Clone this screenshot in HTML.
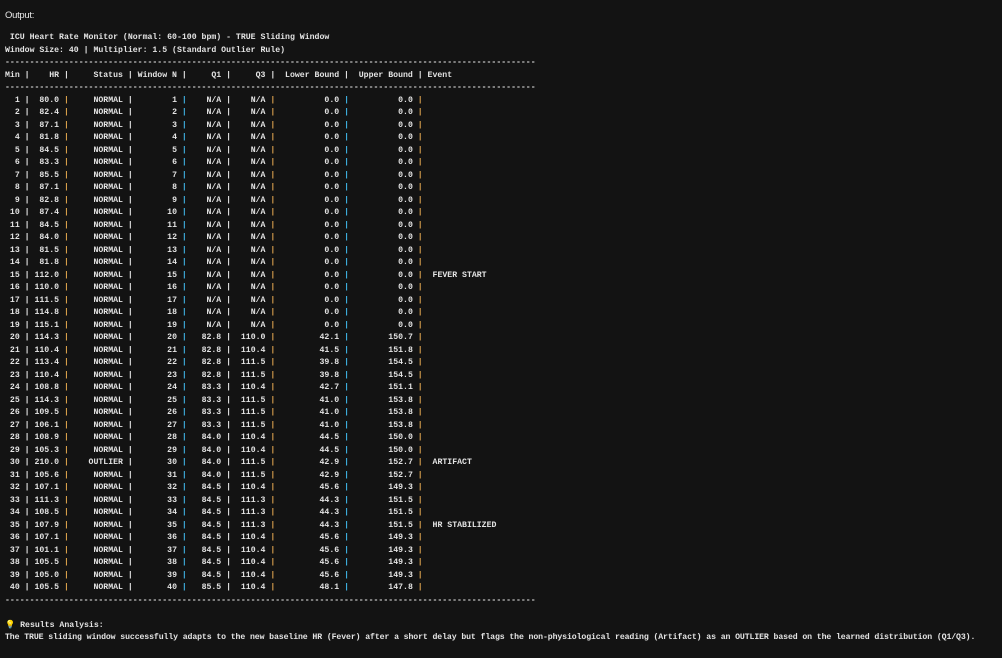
<!DOCTYPE html>
<html><head><meta charset="utf-8"><style>
html,body{margin:0;padding:0;background:#131313;width:1002px;height:658px;overflow:hidden}
.out{position:absolute;left:5px;top:10px;font-family:"Liberation Sans",sans-serif;font-size:9.5px;color:#e8e8e8;letter-spacing:-0.3px}
pre{position:absolute;left:5px;top:32px;margin:0;font-family:"Liberation Mono",monospace;font-weight:bold;font-size:8.2px;line-height:12.5px;color:#e4e4e4;white-space:pre}
o{color:#d9a04c}
b{color:#3fb4e6;font-weight:bold}
.l{letter-spacing:-0.11px}
</style></head><body>
<div class="out">Output:</div>
<pre> ICU Heart Rate Monitor (Normal: 60-100 bpm) - TRUE Sliding Window
Window Size: 40 | Multiplier: 1.5 (Standard Outlier Rule)
------------------------------------------------------------------------------------------------------------
Min |    HR |     Status | Window N |     Q1 |     Q3 |  Lower Bound |  Upper Bound | Event
------------------------------------------------------------------------------------------------------------
  1 |  80.0 <o>|</o>     NORMAL |        1 <b>|</b>    N/A |    N/A <o>|</o>          0.0 <b>|</b>          0.0 <o>|</o>
  2 |  82.4 <o>|</o>     NORMAL |        2 <b>|</b>    N/A |    N/A <o>|</o>          0.0 <b>|</b>          0.0 <o>|</o>
  3 |  87.1 <o>|</o>     NORMAL |        3 <b>|</b>    N/A |    N/A <o>|</o>          0.0 <b>|</b>          0.0 <o>|</o>
  4 |  81.8 <o>|</o>     NORMAL |        4 <b>|</b>    N/A |    N/A <o>|</o>          0.0 <b>|</b>          0.0 <o>|</o>
  5 |  84.5 <o>|</o>     NORMAL |        5 <b>|</b>    N/A |    N/A <o>|</o>          0.0 <b>|</b>          0.0 <o>|</o>
  6 |  83.3 <o>|</o>     NORMAL |        6 <b>|</b>    N/A |    N/A <o>|</o>          0.0 <b>|</b>          0.0 <o>|</o>
  7 |  85.5 <o>|</o>     NORMAL |        7 <b>|</b>    N/A |    N/A <o>|</o>          0.0 <b>|</b>          0.0 <o>|</o>
  8 |  87.1 <o>|</o>     NORMAL |        8 <b>|</b>    N/A |    N/A <o>|</o>          0.0 <b>|</b>          0.0 <o>|</o>
  9 |  82.8 <o>|</o>     NORMAL |        9 <b>|</b>    N/A |    N/A <o>|</o>          0.0 <b>|</b>          0.0 <o>|</o>
 10 |  87.4 <o>|</o>     NORMAL |       10 <b>|</b>    N/A |    N/A <o>|</o>          0.0 <b>|</b>          0.0 <o>|</o>
 11 |  84.5 <o>|</o>     NORMAL |       11 <b>|</b>    N/A |    N/A <o>|</o>          0.0 <b>|</b>          0.0 <o>|</o>
 12 |  84.0 <o>|</o>     NORMAL |       12 <b>|</b>    N/A |    N/A <o>|</o>          0.0 <b>|</b>          0.0 <o>|</o>
 13 |  81.5 <o>|</o>     NORMAL |       13 <b>|</b>    N/A |    N/A <o>|</o>          0.0 <b>|</b>          0.0 <o>|</o>
 14 |  81.8 <o>|</o>     NORMAL |       14 <b>|</b>    N/A |    N/A <o>|</o>          0.0 <b>|</b>          0.0 <o>|</o>
 15 | 112.0 <o>|</o>     NORMAL |       15 <b>|</b>    N/A |    N/A <o>|</o>          0.0 <b>|</b>          0.0 <o>|</o>  FEVER START
 16 | 110.0 <o>|</o>     NORMAL |       16 <b>|</b>    N/A |    N/A <o>|</o>          0.0 <b>|</b>          0.0 <o>|</o>
 17 | 111.5 <o>|</o>     NORMAL |       17 <b>|</b>    N/A |    N/A <o>|</o>          0.0 <b>|</b>          0.0 <o>|</o>
 18 | 114.8 <o>|</o>     NORMAL |       18 <b>|</b>    N/A |    N/A <o>|</o>          0.0 <b>|</b>          0.0 <o>|</o>
 19 | 115.1 <o>|</o>     NORMAL |       19 <b>|</b>    N/A |    N/A <o>|</o>          0.0 <b>|</b>          0.0 <o>|</o>
 20 | 114.3 <o>|</o>     NORMAL |       20 <b>|</b>   82.8 |  110.0 <o>|</o>         42.1 <b>|</b>        150.7 <o>|</o>
 21 | 110.4 <o>|</o>     NORMAL |       21 <b>|</b>   82.8 |  110.4 <o>|</o>         41.5 <b>|</b>        151.8 <o>|</o>
 22 | 113.4 <o>|</o>     NORMAL |       22 <b>|</b>   82.8 |  111.5 <o>|</o>         39.8 <b>|</b>        154.5 <o>|</o>
 23 | 110.4 <o>|</o>     NORMAL |       23 <b>|</b>   82.8 |  111.5 <o>|</o>         39.8 <b>|</b>        154.5 <o>|</o>
 24 | 108.8 <o>|</o>     NORMAL |       24 <b>|</b>   83.3 |  110.4 <o>|</o>         42.7 <b>|</b>        151.1 <o>|</o>
 25 | 114.3 <o>|</o>     NORMAL |       25 <b>|</b>   83.3 |  111.5 <o>|</o>         41.0 <b>|</b>        153.8 <o>|</o>
 26 | 109.5 <o>|</o>     NORMAL |       26 <b>|</b>   83.3 |  111.5 <o>|</o>         41.0 <b>|</b>        153.8 <o>|</o>
 27 | 106.1 <o>|</o>     NORMAL |       27 <b>|</b>   83.3 |  111.5 <o>|</o>         41.0 <b>|</b>        153.8 <o>|</o>
 28 | 108.9 <o>|</o>     NORMAL |       28 <b>|</b>   84.0 |  110.4 <o>|</o>         44.5 <b>|</b>        150.0 <o>|</o>
 29 | 105.3 <o>|</o>     NORMAL |       29 <b>|</b>   84.0 |  110.4 <o>|</o>         44.5 <b>|</b>        150.0 <o>|</o>
 30 | 210.0 <o>|</o>    OUTLIER |       30 <b>|</b>   84.0 |  111.5 <o>|</o>         42.9 <b>|</b>        152.7 <o>|</o>  ARTIFACT
 31 | 105.6 <o>|</o>     NORMAL |       31 <b>|</b>   84.0 |  111.5 <o>|</o>         42.9 <b>|</b>        152.7 <o>|</o>
 32 | 107.1 <o>|</o>     NORMAL |       32 <b>|</b>   84.5 |  110.4 <o>|</o>         45.6 <b>|</b>        149.3 <o>|</o>
 33 | 111.3 <o>|</o>     NORMAL |       33 <b>|</b>   84.5 |  111.3 <o>|</o>         44.3 <b>|</b>        151.5 <o>|</o>
 34 | 108.5 <o>|</o>     NORMAL |       34 <b>|</b>   84.5 |  111.3 <o>|</o>         44.3 <b>|</b>        151.5 <o>|</o>
 35 | 107.9 <o>|</o>     NORMAL |       35 <b>|</b>   84.5 |  111.3 <o>|</o>         44.3 <b>|</b>        151.5 <o>|</o>  HR STABILIZED
 36 | 107.1 <o>|</o>     NORMAL |       36 <b>|</b>   84.5 |  110.4 <o>|</o>         45.6 <b>|</b>        149.3 <o>|</o>
 37 | 101.1 <o>|</o>     NORMAL |       37 <b>|</b>   84.5 |  110.4 <o>|</o>         45.6 <b>|</b>        149.3 <o>|</o>
 38 | 105.5 <o>|</o>     NORMAL |       38 <b>|</b>   84.5 |  110.4 <o>|</o>         45.6 <b>|</b>        149.3 <o>|</o>
 39 | 105.0 <o>|</o>     NORMAL |       39 <b>|</b>   84.5 |  110.4 <o>|</o>         45.6 <b>|</b>        149.3 <o>|</o>
 40 | 105.5 <o>|</o>     NORMAL |       40 <b>|</b>   85.5 |  110.4 <o>|</o>         48.1 <b>|</b>        147.8 <o>|</o>
------------------------------------------------------------------------------------------------------------

<span style="color:#f2c94c">💡</span> Results Analysis:
<span class="l">The TRUE sliding window successfully adapts to the new baseline HR (Fever) after a short delay but flags the non-physiological reading (Artifact) as an OUTLIER based on the learned distribution (Q1/Q3).</span></pre>
</body></html>
